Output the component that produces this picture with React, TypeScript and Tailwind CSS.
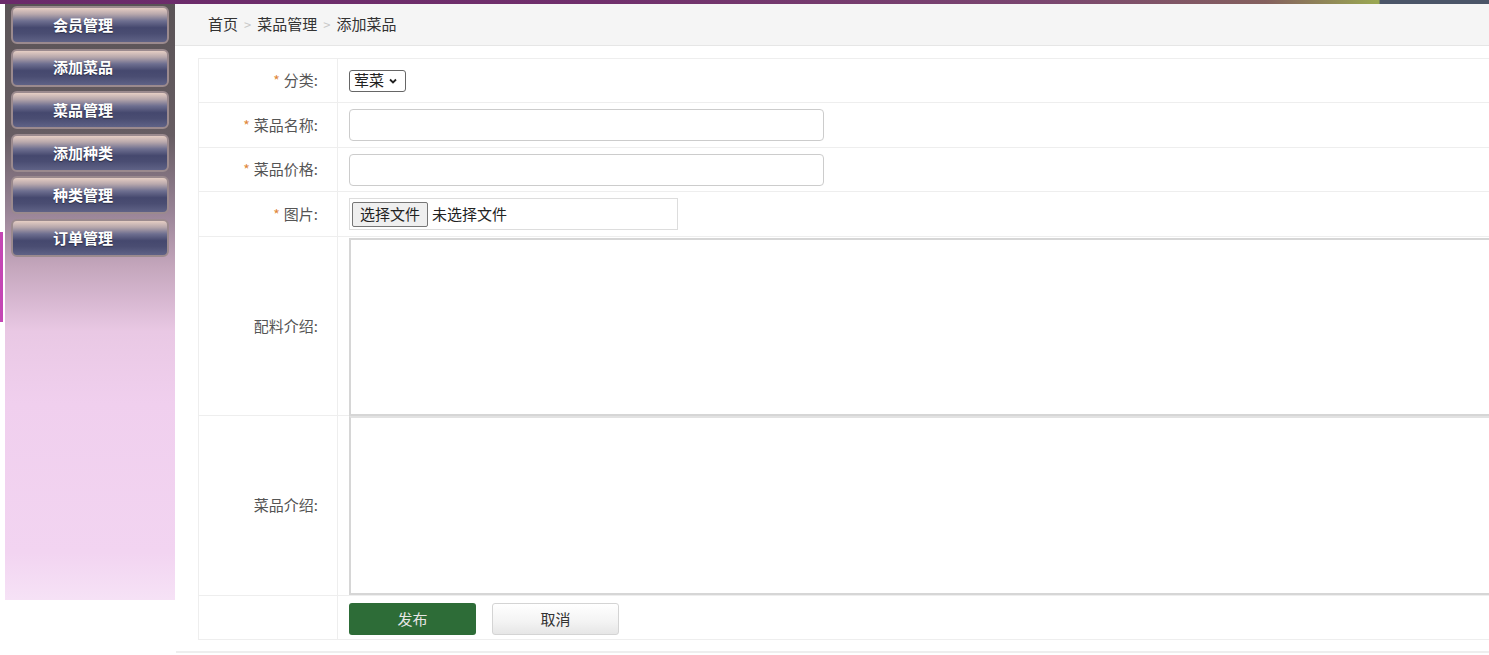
import React from "react";

const font = { fontFamily: '"Noto Sans CJK SC", "Noto Sans", sans-serif' };

const menu = ["会员管理", "添加菜品", "菜品管理", "添加种类", "种类管理", "订单管理"];

function Star() {
  return <span className="text-[#e0883a] mr-[4px] text-[14px]">*</span>;
}

function Label({ star, text }: { star?: boolean; text: string }) {
  return (
    <div className="w-[139px] shrink-0 border-r border-[#eeeeee] flex items-center justify-end pr-[19px] text-[15px] text-[#555]">
      {star && <Star />}
      <span>{text}:</span>
    </div>
  );
}

export default function App() {
  return (
    <div className="w-[1489px] h-[655px] overflow-hidden bg-white flex flex-col" style={font}>
      <div className="h-[4px] w-full shrink-0 bg-[linear-gradient(90deg,#6a2a6a_0%,#702f6c_40%,#7a4670_70%,#84605e_85%,#9aa852_92.6%,#4b5568_92.7%,#4b5568_100%)]" />
      <div className="flex flex-1 min-h-0">
        <div className="w-[175px] shrink-0 pl-[5px] relative">
          <div className="absolute left-0 top-[228px] w-[3px] h-[90px] bg-[#c446b4]" />
          <div className="w-[170px] h-[596px] bg-[linear-gradient(180deg,#5a5356_0%,#675d63_22%,#958193_34%,#c4a6bc_44%,#e9c8e4_55%,#f0cfee_67%,#f2d4f1_92%,#f6e2f6_100%)] flex flex-col gap-[4.6px] pt-[2px] px-[6px]">
            {menu.map((m) => (
              <div
                key={m}
                className="h-[38px] rounded-[6px] border-2 border-[#9b8a8e] bg-[linear-gradient(180deg,#e6cec4_0%,#b8a8ac_18%,#6e6f90_38%,#45486e_58%,#4a4d72_75%,#5f6286_100%)] flex items-center justify-center text-white font-bold text-[15px] [text-shadow:0_1px_1px_rgba(0,0,0,0.4)]"
              >
                <span className="-ml-[14px]">{m}</span>
              </div>
            ))}
          </div>
        </div>
        <div className="flex-1 min-w-0 flex flex-col">
          <div className="h-[42px] shrink-0 bg-[#f5f5f5] border-b border-[#e6e6e6] flex items-center pl-[33px] text-[15px] text-[#333]">
            <span>首页</span>
            <span className="mx-[6px] text-[#c8c8c8] text-[13px]">&gt;</span>
            <span>菜品管理</span>
            <span className="mx-[6px] text-[#c8c8c8] text-[13px]">&gt;</span>
            <span>添加菜品</span>
          </div>
          <div className="ml-[23px] mt-[12px] w-[1400px] border border-[#eeeeee] flex flex-col">
            <div className="h-[44px] flex border-b border-[#eeeeee]">
              <Label star text="分类" />
              <div className="flex items-center pl-[11px]">
                <div className="h-[22px] w-[57px] border border-[#666] rounded-[3px] flex items-center pl-[4px] text-[15px] text-[#222]">
                  <span>荤菜</span>
                  <svg width="10" height="10" viewBox="0 0 10 10" className="ml-[4px]">
                    <path d="M2 3.5 L5 6.5 L8 3.5" stroke="#222" strokeWidth="1.8" fill="none" />
                  </svg>
                </div>
              </div>
            </div>
            <div className="h-[45px] flex border-b border-[#eeeeee]">
              <Label star text="菜品名称" />
              <div className="flex items-center pl-[11px]">
                <div className="h-[32px] w-[475px] border border-[#cccccc] rounded-[4px] bg-white" />
              </div>
            </div>
            <div className="h-[44px] flex border-b border-[#eeeeee]">
              <Label star text="菜品价格" />
              <div className="flex items-center pl-[11px]">
                <div className="h-[32px] w-[475px] border border-[#cccccc] rounded-[4px] bg-white" />
              </div>
            </div>
            <div className="h-[45px] flex border-b border-[#eeeeee]">
              <Label star text="图片" />
              <div className="flex items-center pl-[11px]">
                <div className="h-[32px] w-[329px] border border-[#dddddd] flex items-center pl-[2px] text-[15px] text-[#222]">
                  <div className="h-[25px] px-[7px] bg-[#efefef] border border-[#767676] rounded-[2px] flex items-center">
                    选择文件
                  </div>
                  <span className="ml-[4px]">未选择文件</span>
                </div>
              </div>
            </div>
            <div className="h-[179px] flex border-b border-[#eeeeee]">
              <Label text="配料介绍" />
              <div className="flex pl-[11px] pt-[1px] flex-1">
                <div className="h-[178px] w-[1300px] border-2 border-[#d6d6d6] bg-white" />
              </div>
            </div>
            <div className="h-[180px] flex border-b border-[#eeeeee]">
              <Label text="菜品介绍" />
              <div className="flex pl-[11px] flex-1">
                <div className="h-[179px] w-[1300px] border-2 border-[#d6d6d6] border-t-[#e2e2e2] bg-white" />
              </div>
            </div>
            <div className="h-[43px] flex">
              <div className="w-[139px] shrink-0 border-r border-[#eeeeee]" />
              <div className="flex items-start pt-[7px] pl-[11px] gap-[16px]">
                <div className="h-[32px] w-[127px] rounded-[3px] bg-[#2d6c37] text-[#e6e6e6] text-[15px] flex items-center justify-center">
                  发布
                </div>
                <div className="h-[32px] w-[127px] rounded-[3px] border border-[#d4d4d4] bg-[linear-gradient(180deg,#ffffff_0%,#f3f3f3_60%,#e6e6e6_100%)] text-[#333] text-[15px] flex items-center justify-center">
                  取消
                </div>
              </div>
            </div>
          </div>
          <div className="mt-[11px] ml-[1px] border-t-2 border-[#eeeeee]" />
        </div>
      </div>
    </div>
  );
}
